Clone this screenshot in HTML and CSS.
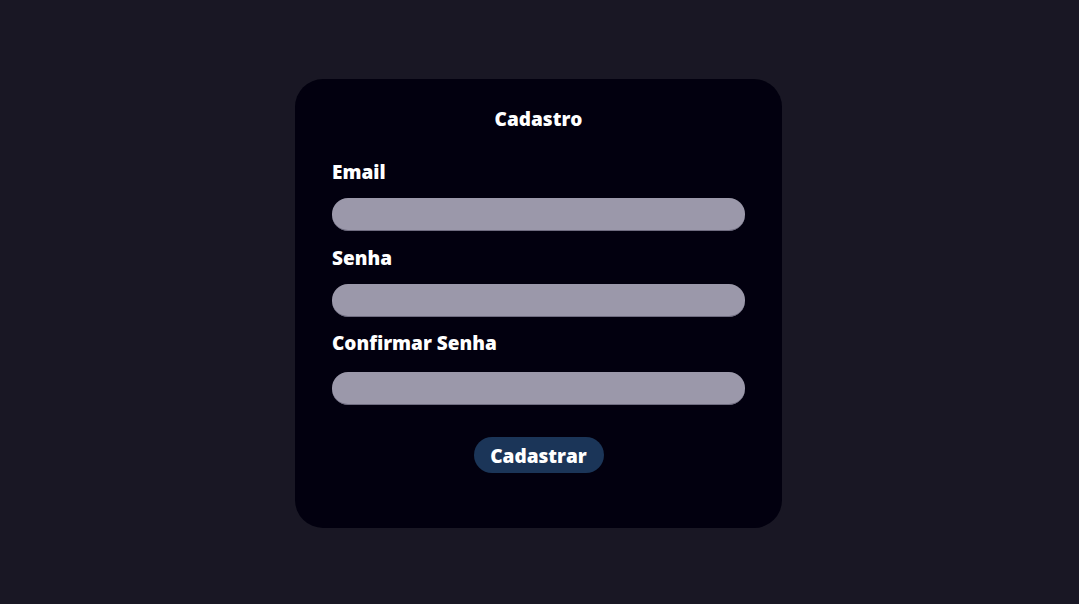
FILE: index.html
```html
<!DOCTYPE html>
<html lang="pt-BR">
<head>
<meta charset="utf-8">
<title>Cadastro</title>
<link rel="stylesheet" href="styles.css">
</head>
<body>
<main class="page">
  <form class="card">
    <h1 class="title">Cadastro</h1>
    <label class="label" for="email">Email</label>
    <input class="field" id="email" type="email">
    <label class="label gap" for="senha">Senha</label>
    <input class="field" id="senha" type="password">
    <label class="label gap last" for="confirmar">Confirmar Senha</label>
    <input class="field" id="confirmar" type="password">
    <button class="btn" type="button">Cadastrar</button>
  </form>
</main>
</body>
</html>
```
FILE: styles.css
```css
html, body {
  margin: 0;
  padding: 0;
  height: 100%;
}
body {
  background: #191724;
  font-family: "Open Sans", "Noto Sans", sans-serif;
  color: #ffffff;
}
.page {
  height: 100%;
  display: flex;
  justify-content: center;
  align-items: flex-start;
  padding-top: 79px;
  padding-right: 2px;
  box-sizing: border-box;
}
.card {
  width: 487px;
  box-sizing: border-box;
  background: #02000f;
  border-radius: 28px;
  padding: 27px 37px 55px;
  display: flex;
  flex-direction: column;
}
.title {
  margin: 0 0 27px;
  font-size: 19px;
  line-height: 26px;
  font-weight: 800;
  text-align: center;
}
.label {
  font-size: 19px;
  line-height: 26px;
  font-weight: 800;
  margin-bottom: 13px;
}
.label.gap {
  margin-top: 14px;
}
.label.last {
  margin-top: 13px;
  margin-bottom: 16px;
}
.field {
  height: 33px;
  box-sizing: border-box;
  border: none;
  border-bottom: 1px solid #6f6c80;
  border-radius: 16px;
  background: #9b98aa;
  padding: 0 14px;
  font: inherit;
  outline: none;
}
.btn {
  align-self: center;
  margin-top: 32px;
  height: 36px;
  width: 130px;
  border: none;
  border-radius: 18px;
  background: #1b3558;
  color: #ffffff;
  font-family: inherit;
  font-size: 19px;
  font-weight: 800;
  padding: 2px 0 0;
}
```
